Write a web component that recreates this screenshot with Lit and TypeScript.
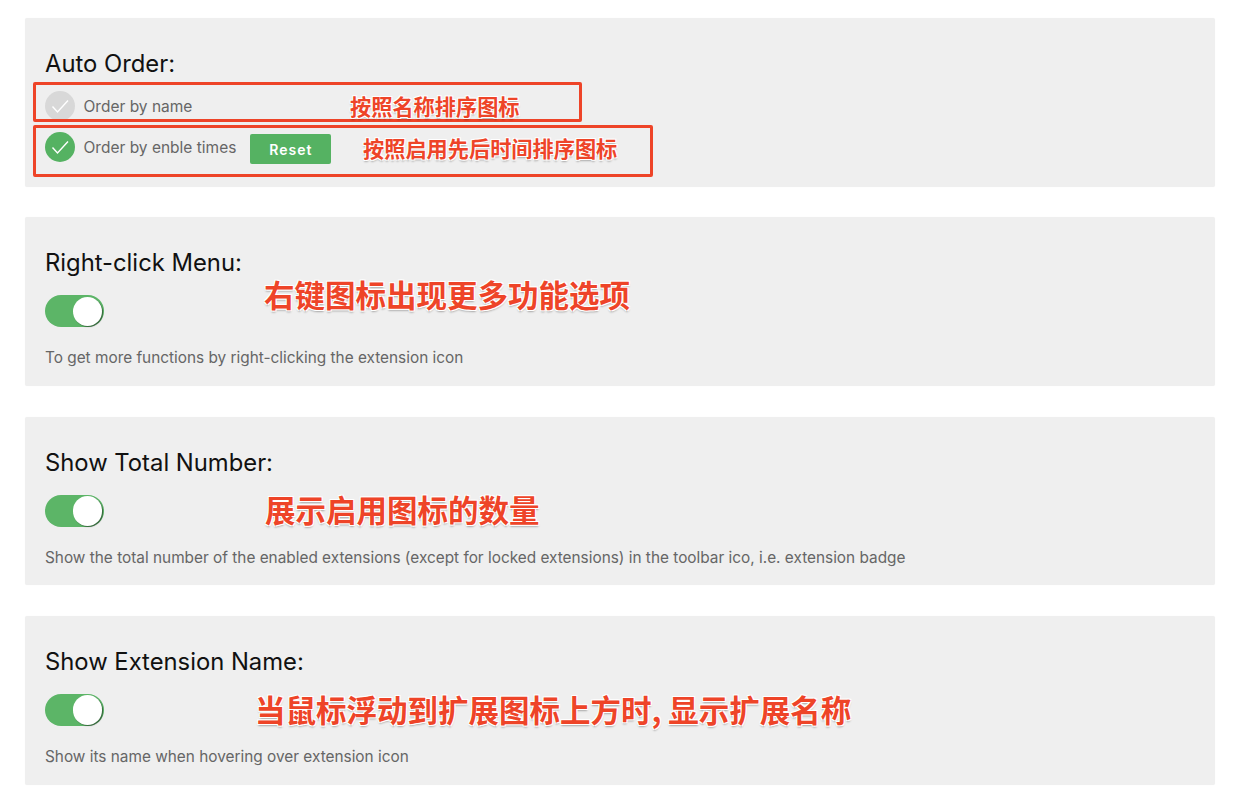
import { LitElement, html, css } from "lit";
import { customElement } from "lit/decorators.js";

const check = (on: boolean) => html`<svg class="chk ${on ? "on" : "off"}" viewBox="0 0 30 30" width="30" height="30">
  <circle cx="15" cy="15" r="15"></circle>
  <path d="M7.5 15.5 L12.5 21 L23 9.5" fill="none" stroke="#fff" stroke-width="1.4"></path>
</svg>`;

const toggle = html`<div class="toggle"><span class="knob"></span></div>`;

@customElement("app-root")
export class AppRoot extends LitElement {
  static styles = css`
    :host { display: block; background: #fff; font-family: Inter, "Liberation Sans", Arial, sans-serif; }
    .page { position: relative; display: flex; flex-direction: column; gap: 30.4px; padding: 18px 25px 16px; height: 801px; box-sizing: border-box; overflow: hidden; }
    .card { box-sizing: border-box; height: 168.9px; background: #efefef; border-radius: 2px; padding: 32px 20px 0; box-shadow: 0 0 1px rgba(0,0,0,.06); }
    h2 { margin: 0; font-size: 23.8px; line-height: 28px; font-weight: 400; color: #111; }
    .toggle { margin-top: 18px; width: 59px; height: 32px; border-radius: 16px; background: #5cb567; position: relative; }
    .knob { position: absolute; right: 2px; top: 1.5px; width: 29.5px; height: 29.5px; border-radius: 50%; background: #fff; box-shadow: 1px 1px 1px rgba(0,0,0,.45); }
    p { margin: 21px 0 0; font-size: 15.37px; line-height: 20px; color: #666; }
    .row { display: flex; align-items: center; height: 30px; font-size: 15.5px; color: #666; }
    .row.first { margin-top: 13px; }
    .row.second { margin-top: 11px; }
    .row span { margin-left: 8.5px; }
    .chk { display: block; flex: none; }
    .chk.on circle { fill: #55b262; }
    .chk.off circle { fill: #d8d8d8; }
    button { margin: 4px 0 0 14px; width: 81px; height: 30px; border: 0; border-radius: 2px; background: #55b262; color: #fff; font: 600 14px Inter, "Liberation Sans", Arial, sans-serif; letter-spacing: 1px; padding: 0; }
    .box { position: absolute; box-sizing: border-box; border: 3px solid #ee4428; border-radius: 2px; }
    .note { position: absolute; color: #ee4428; font-family: "Noto Sans CJK SC", sans-serif; font-weight: 700; white-space: nowrap; line-height: 1;
      text-shadow: 1px 1px 0 #fff, -1px 1px 0 #fff, 1px -1px 0 #fff, -1px -1px 0 #fff, 0 2px 2px rgba(0,0,0,.3); }
    .s20 { font-size: 21.2px; }
    .s30 { font-size: 30.5px; }
  `;

  render() {
    return html`<div class="page">
      <section class="card">
        <h2>Auto Order:</h2>
        <div class="row first">${check(false)}<span>Order by name</span></div>
        <div class="row second">${check(true)}<span>Order by enble times</span><button>Reset</button></div>
      </section>
      <section class="card">
        <h2>Right-click Menu:</h2>
        ${toggle}
        <p>To get more functions by right-clicking the extension icon</p>
      </section>
      <section class="card">
        <h2>Show Total Number:</h2>
        ${toggle}
        <p>Show the total number of the enabled extensions (except for locked extensions) in the toolbar ico, i.e. extension badge</p>
      </section>
      <section class="card">
        <h2>Show Extension Name:</h2>
        ${toggle}
        <p>Show its name when hovering over extension icon</p>
      </section>
      <div class="box" style="left:33px;top:82px;width:549px;height:40px"></div>
      <div class="box" style="left:33px;top:125px;width:620px;height:52px"></div>
      <div class="note s20" style="left:350px;top:95px">按照名称排序图标</div>
      <div class="note s20" style="left:363px;top:137px">按照启用先后时间排序图标</div>
      <div class="note s30" style="left:264px;top:279px">右键图标出现更多功能选项</div>
      <div class="note s30" style="left:265px;top:494px">展示启用图标的数量</div>
      <div class="note s30" style="left:255px;top:694px">当鼠标浮动到扩展图标上方时, 显示扩展名称</div>
    </div>`;
  }
}
